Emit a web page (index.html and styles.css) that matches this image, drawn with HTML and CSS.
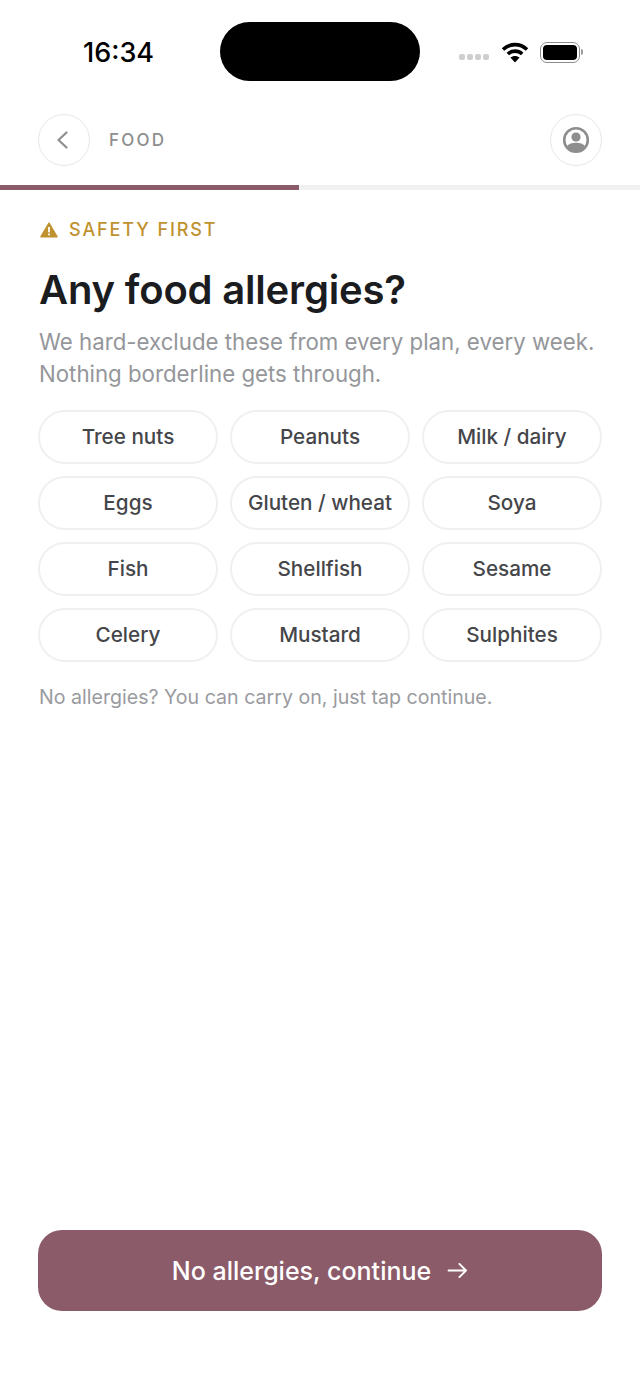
FILE: index.html
```html
<!DOCTYPE html>
<html lang="en">

<head>
    <meta charset="utf-8">
    <meta name="viewport" content="width=device-width, initial-scale=1.0">
    <title>Food allergies</title>

    <link rel="stylesheet" href="styles.css">
</head>

<body>

    <div class="phone">
        <div class="statusbar">
            <span class="time">16:34</span>
            <div class="island"></div>
            <div class="status-icons">
                <div class="signal"><i></i><i></i><i></i><i></i></div>
                <svg class="wifi" width="28" height="22" viewBox="0 0 28 22">
                    <path d="M2 8.5C9 2 19 2 26 8.5" fill="none" stroke="#000" stroke-width="3.6" />
                    <path d="M6.8 13C11 9.2 17 9.2 21.2 13" fill="none" stroke="#000" stroke-width="3.6" />
                    <path d="M14 21.5L9.4 16.6C12 14.4 16 14.4 18.6 16.6Z" fill="#000" />
                </svg>
                <div class="battery">
                    <div class="battery-body"><div class="battery-fill"></div></div>
                    <div class="battery-cap"></div>
                </div>
            </div>
        </div>

        <header class="topbar">
            <div class="topbar-left">
                <button class="round-btn">
                    <svg class="chevron" width="13" height="18" viewBox="0 0 13 18">
                        <path d="M10.5 1.5L2.5 9L10.5 16.5" fill="none" stroke="#8e8e8e" stroke-width="2.2" stroke-linecap="round" stroke-linejoin="round" />
                    </svg>
                </button>
                <span class="section-name">FOOD</span>
            </div>
            <button class="round-btn">
                <svg width="28" height="28" viewBox="0 0 28 28">
                    <circle cx="14" cy="14" r="11.8" fill="none" stroke="#8e8e8e" stroke-width="2.6" />
                    <circle cx="14" cy="11" r="4.6" fill="#8e8e8e" />
                    <path d="M4.6 21C7 17.4 10 16.8 14 16.8S21 17.4 23.4 21C21 24.4 17.5 26 14 26S7 24.4 4.6 21Z" fill="#8e8e8e" />
                </svg>
            </button>
        </header>

        <div class="progress"><div class="progress-fill"></div></div>

        <main class="content">
            <div class="eyebrow">
                <svg width="18" height="16" viewBox="0 0 20 18">
                    <path d="M10 1.5L18.8 16.5H1.2Z" fill="#c0922f" stroke="#c0922f" stroke-width="2" stroke-linejoin="round" />
                    <rect x="9" y="5.6" width="2" height="6" fill="#fff" />
                    <rect x="9" y="13" width="2" height="2" fill="#fff" />
                </svg>
                <span>SAFETY FIRST</span>
            </div>

            <h1>Any food allergies?</h1>
            <p class="lead">We hard-exclude these from every plan, every week. Nothing borderline gets through.</p>

            <div class="chips">
                <button class="chip">Tree nuts</button>
                <button class="chip">Peanuts</button>
                <button class="chip">Milk / dairy</button>
                <button class="chip">Eggs</button>
                <button class="chip">Gluten / wheat</button>
                <button class="chip">Soya</button>
                <button class="chip">Fish</button>
                <button class="chip">Shellfish</button>
                <button class="chip">Sesame</button>
                <button class="chip">Celery</button>
                <button class="chip">Mustard</button>
                <button class="chip">Sulphites</button>
            </div>

            <p class="note">No allergies? You can carry on, just tap continue.</p>
        </main>

        <footer class="actions">
            <button class="continue">
                <span>No allergies, continue</span>
                <svg width="21" height="17" viewBox="0 0 22 18">
                    <path d="M1.5 9H20M13 2L20 9L13 16" fill="none" stroke="#fff" stroke-width="2" stroke-linecap="round" stroke-linejoin="round" />
                </svg>
            </button>
        </footer>
    </div>

</body>

</html>
```

FILE: styles.css
```css
* {
    box-sizing: border-box;
}

body {
    margin: 0;
    padding: 0;
    background-color: #fff;
    font-family: Inter, "Liberation Sans", sans-serif;
}

button {
    font-family: inherit;
    background: #fff;
    padding: 0;
}

.phone {
    display: flex;
    flex-direction: column;
    width: 640px;
    height: 1391px;
    overflow: hidden;
}

/*Status bar*/

.statusbar {
    display: flex;
    align-items: center;
    height: 82px;
    padding: 20px 56px 0 83px;
}

.time {
    width: 137px;
    margin-top: 2px;
    font-size: 27px;
    font-weight: 500;
    color: #000;
}

.island {
    width: 200px;
    height: 59px;
    border-radius: 30px;
    background-color: #000;
}

.status-icons {
    display: flex;
    align-items: center;
    margin-top: 2px;
    margin-left: 39px;
}

.signal {
    display: flex;
    gap: 2px;
    margin-top: 10px;
    margin-right: 12px;
}

.signal i {
    width: 6px;
    height: 6px;
    border-radius: 2px;
    background-color: #cfcfcf;
}

.wifi {
    margin-right: 11px;
}

.battery {
    display: flex;
    align-items: center;
    gap: 1px;
}

.battery-body {
    width: 40px;
    height: 21px;
    padding: 2px;
    border: 1.5px solid #8a8a8a;
    border-radius: 7px;
}

.battery-fill {
    height: 100%;
    border-radius: 4px;
    background-color: #000;
}

.battery-cap {
    width: 2px;
    height: 6px;
    border-radius: 0 2px 2px 0;
    background-color: #9a9a9a;
}

/*Top navigation*/

.topbar {
    display: flex;
    justify-content: space-between;
    align-items: center;
    margin-top: 32px;
    padding: 0 38px;
}

.topbar-left {
    display: flex;
    align-items: center;
    gap: 19px;
}

.round-btn {
    display: flex;
    justify-content: center;
    align-items: center;
    width: 52px;
    height: 52px;
    border: 1.5px solid #e6e6e6;
    border-radius: 50%;
}

.chevron {
    margin-right: 3px;
}

.section-name {
    font-size: 17px;
    font-weight: 500;
    letter-spacing: 2.2px;
    color: #8e8e8e;
}

.progress {
    height: 5px;
    margin-top: 19px;
    background-color: #f1f1f1;
}

.progress-fill {
    width: 299px;
    height: 100%;
    background-color: #8c5b69;
}

/*Main content*/

.content {
    flex: 1;
    padding: 0 38px;
}

.eyebrow {
    display: flex;
    align-items: center;
    gap: 11px;
    margin-top: 29px;
    padding-left: 2px;
    font-size: 18px;
    font-weight: 500;
    letter-spacing: 1.9px;
    color: #c0922f;
}

h1 {
    margin: 26px 0 0;
    padding-left: 1px;
    font-size: 40px;
    font-weight: 600;
    line-height: 48px;
    letter-spacing: -0.18px;
    color: #1b1c20;
}

.lead {
    margin: 12px 0 0;
    padding-left: 1px;
    font-size: 22.25px;
    line-height: 32px;
    color: #94969a;
}

.chips {
    display: grid;
    grid-template-columns: repeat(3, 180px);
    grid-auto-rows: 54px;
    gap: 12px;
    margin-top: 20px;
}

.chip {
    padding-bottom: 2px;
    border: 2px solid #f0f0f0;
    border-radius: 27px;
    font-size: 20.7px;
    font-weight: 500;
    color: #45464a;
}

.note {
    margin: 23px 0 0;
    padding-left: 1px;
    font-size: 19.6px;
    line-height: 24px;
    color: #9a9b9f;
}

/*Continue button*/

.actions {
    padding: 0 38px 80px;
}

.continue {
    display: flex;
    justify-content: center;
    align-items: center;
    gap: 16px;
    width: 564px;
    height: 81px;
    border: 0;
    border-radius: 24px;
    background-color: #8c5b69;
    font-size: 25px;
    font-weight: 500;
    color: #fff;
}
```
